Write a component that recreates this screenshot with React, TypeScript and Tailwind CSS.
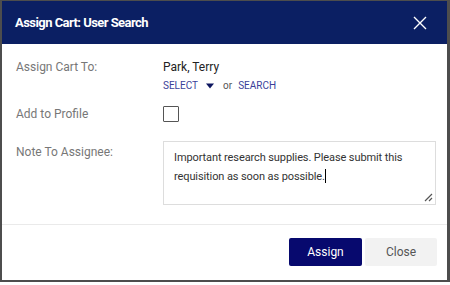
export default function App() {
  return (
    <div className="w-[450px] h-[285px] bg-white" style={{ fontFamily: 'Roboto, "Liberation Sans", sans-serif' }}>
      <div className="flex h-[282px] flex-col border-t border-b-2 border-l-2 border-r-[3px] border-[#4d4d4d]">
        <div className="flex h-[43px] items-center justify-between bg-[#0b1f63] pl-[13px] pr-[20px]">
          <h2 className="text-[13px] font-bold text-white tracking-[-0.55px]">Assign Cart: User Search</h2>
          <svg width="14" height="14" viewBox="0 0 14 14" className="text-white">
            <path d="M1 1L13 13M13 1L1 13" stroke="currentColor" strokeWidth="1.4" />
          </svg>
        </div>
        <div className="grid grid-cols-[147px_1fr] pl-[14px] pr-[11px] pt-[15px] pb-[19px] text-[12px]">
          <div className="leading-4 text-[#777]">Assign Cart To:</div>
          <div>
            <div className="leading-4 text-[#222]">Park, Terry</div>
            <div className="mt-[4px] flex items-center text-[10px] leading-[14px]">
              <span className="text-[#3b3f9a]">SELECT</span>
              <svg width="8" height="6" viewBox="0 0 8 6" className="ml-[8px] mr-[9px]">
                <path d="M0 0.5H8L4 5.5Z" fill="#0d1660" />
              </svg>
              <span className="text-[#555]">or</span>
              <span className="ml-[6px] text-[#3b3f9a]">SEARCH</span>
            </div>
          </div>

          <div className="mt-[13px] flex h-4 items-center text-[#777]">Add to Profile</div>
          <div className="mt-[13px]">
            <div className="h-4 w-4 rounded-[1px] border-[1.5px] border-[#555]" />
          </div>

          <div className="mt-[22px] leading-4 text-[#777]">Note To Assignee:</div>
          <div className="relative mt-[19px] h-[64px] border border-[#ddd] pl-[10px] pr-3 pt-[8px] text-[11px] leading-[15.5px] tracking-[-0.1px] text-[#333]">
            Important research supplies. Please submit this requisition as soon as possible.
            <span className="inline-block h-[14px] w-px translate-y-[3px] bg-black" />
            <svg width="9" height="9" viewBox="0 0 9 9" className="absolute bottom-[2px] right-[2px]">
              <path d="M8 1L1 8M8 5L5 8" stroke="#555" strokeWidth="1.2" />
            </svg>
          </div>
        </div>
        <div className="h-px bg-[#eaeaea]" />
        <div className="flex justify-end gap-[3px] pt-[13px] pr-[10px]">
          <button className="h-[28px] w-[73px] rounded-[2px] bg-[#07096e] text-[12px] text-white">Assign</button>
          <button className="h-[28px] w-[72px] rounded-[2px] bg-[#f2f2f2] text-[12px] text-[#555]">Close</button>
        </div>
      </div>
    </div>
  );
}
